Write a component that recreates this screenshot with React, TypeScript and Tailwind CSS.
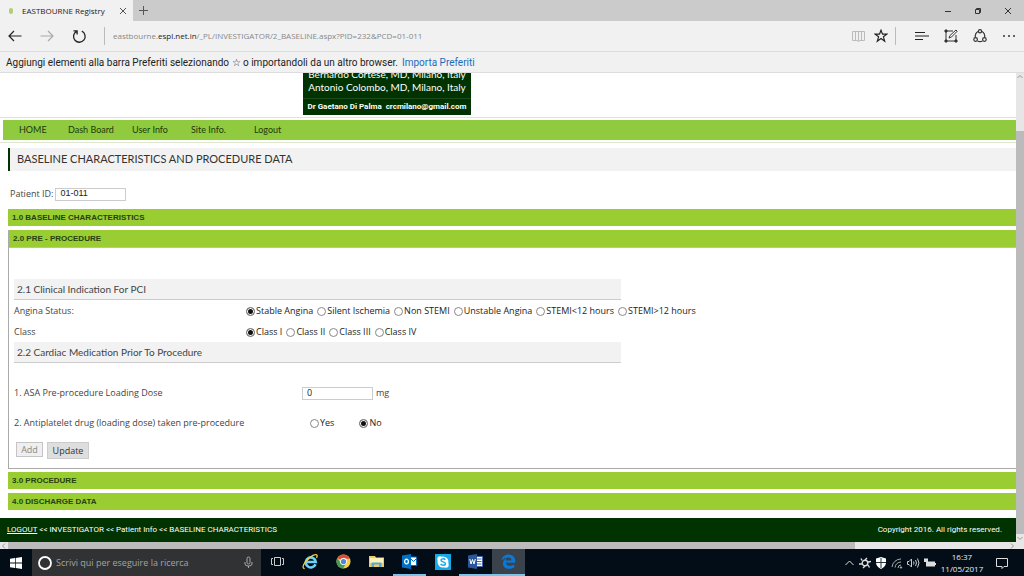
import React from 'react';

const NAV_ITEMS = [
  { label: 'HOME', width: 'w-[49px]' },
  { label: 'Dash Board', width: 'w-16' },
  { label: 'User Info', width: 'w-[59px]' },
  { label: 'Site Info.', width: 'w-[63px]' },
  { label: 'Logout', width: 'w-16' },
];

const ANGINA = ['Stable Angina', 'Silent Ischemia', 'Non STEMI', 'Unstable Angina', 'STEMI<12 hours', 'STEMI>12 hours'];
const CLASSES = ['Class I', 'Class II', 'Class III', 'Class IV'];

interface RadioProps {
  name: string;
  label: string;
  checked?: boolean;
}

const Radio: React.FC<RadioProps> = ({ name, label, checked }) => (
  <label className="flex items-center gap-px whitespace-nowrap text-[#222]">
    <input
      type="radio"
      name={name}
      defaultChecked={checked}
      className="h-[9px] w-[9px] shrink-0 appearance-none rounded-full border border-[#888] bg-white checked:bg-[#111] checked:shadow-[inset_0_0_0_1px_white]"
    />
    {label}
  </label>
);

const SectionBar: React.FC<{ title: string }> = ({ title }) => (
  <h2 className="flex h-[17px] items-center bg-[#9acd32] px-1 font-['Liberation_Sans',sans-serif] text-[8px] font-bold text-[#254012]">{title}</h2>
);

const SubHeading: React.FC<{ title: string }> = ({ title }) => (
  <h3 className="flex h-[21px] w-[607px] max-w-full items-center border-b border-[#ccc] bg-[#f2f2f2] px-[3px] font-[Lato,sans-serif] text-[10px] text-[#444]">{title}</h3>
);

const TitleBar = () => (
  <div className="flex h-[21px] bg-[#cbcbcb]">
    <div className="flex w-[133px] items-center bg-[#f1f1f1] pl-[9px] text-[8px] text-[#222]">
      <span className="mr-[9px] h-[6px] w-1 rounded-full bg-[#b3cd74]" />
      <span className="grow whitespace-nowrap">EASTBOURNE Registry</span>
      <button aria-label="Close tab" className="mr-[6px]">
        <svg width="8" height="8" viewBox="0 0 8 8" stroke="#555" fill="none"><path d="M1 1l6 6M7 1L1 7" /></svg>
      </button>
    </div>
    <button aria-label="New tab" className="ml-[6px]">
      <svg width="9" height="9" viewBox="0 0 9 9" stroke="#555" fill="none"><path d="M4.500 0v9M0 4.500h9" /></svg>
    </button>
    <div className="ml-auto flex items-center gap-[22px] pr-3">
      <button aria-label="Minimize"><svg width="8" height="8" viewBox="0 0 8 8" stroke="#333" fill="none"><path d="M1 4.500h6" /></svg></button>
      <button aria-label="Restore"><svg width="8" height="8" viewBox="0 0 8 8" stroke="#333" fill="none"><path d="M1.500 2.500h4v4h-4zM2.500 2.500v-1h4v4h-1" /></svg></button>
      <button aria-label="Close"><svg width="8" height="8" viewBox="0 0 8 8" stroke="#333" fill="none"><path d="M1 1l6 6M7 1L1 7" /></svg></button>
    </div>
  </div>
);

const Toolbar = () => (
  <div className="flex h-[31px] items-center border-b border-[#dcdcdc] bg-[#f1f1f1] px-2">
    <button aria-label="Back">
      <svg width="14" height="12" viewBox="0 0 14 12" stroke="#222" strokeWidth="1.200" fill="none"><path d="M13.500 6H1M6 1L1 6l5 5" /></svg>
    </button>
    <button aria-label="Forward" className="ml-[18px]">
      <svg width="14" height="12" viewBox="0 0 14 12" stroke="#aaa" strokeWidth="1.200" fill="none"><path d="M.5 6H13M8 1l5 5-5 5" /></svg>
    </button>
    <button aria-label="Refresh" className="ml-[18px]">
      <svg width="15" height="15" viewBox="0 0 15 15" stroke="#222" strokeWidth="1.300" fill="none"><path d="M9.800 2.200A5.800 5.800 0 1 1 4.500 2.400M1.500 1.900h3.600v3.600" /></svg>
    </button>
    <p className="ml-[17px] grow whitespace-nowrap border-l border-[#bbb] py-[2px] pl-2 text-[8px] leading-[14px] text-[#888]">
      eastbourne.<span className="text-[#222]">espl.net.in</span>/_PL/INVESTIGATOR/2_BASELINE.aspx?PID=232&amp;PCD=01-011
    </p>
    <button aria-label="Reading view">
      <svg width="14" height="12" viewBox="0 0 14 12" stroke="#bbb" fill="none"><path d="M.5 1.500h12v9H8l-1.500 1L5 10.500H.5zM6.500 1.500v9.500M3.500 2v8M9.500 2v8" /></svg>
    </button>
    <button aria-label="Favorite" className="ml-2">
      <svg width="14" height="14" viewBox="0 0 14 14" stroke="#222" strokeWidth="1.200" fill="none"><path d="M7 1.200l1.500 4h4.300L9.400 7.800l1.300 4.400L7 9.600l-3.700 2.600 1.300-4.400L1.200 5.200h4.300z" /></svg>
    </button>
    <span className="mx-[7px] h-[18px] w-px bg-[#bbb]" />
    <button aria-label="Hub" className="ml-3">
      <svg width="14" height="12" viewBox="0 0 14 12" stroke="#222" strokeWidth="1.200" fill="none"><path d="M0 2.500h10M0 6h14M0 9.500h8" /></svg>
    </button>
    <button aria-label="Web note" className="ml-[15px]">
      <svg width="14" height="14" viewBox="0 0 14 14" stroke="#333" fill="none">
        <path d="M9 2H2v10h10V6" />
        <path d="M5 9l1-2.500 6-5.500 1.200 1.200L7.500 8z" fill="#fff" />
        <path d="M1 1h2v2H1zM1 11h2v2H1zM11 11h2v2h-2z" fill="#333" />
      </svg>
    </button>
    <button aria-label="Share" className="ml-[15px]">
      <svg width="14" height="14" viewBox="0 0 14 14" stroke="#333" strokeWidth="1.200" fill="none">
        <path d="M5.200 2.500C3 3.500 2 5.500 2.300 8.500M8.800 2.500c2.200 1 3.200 3 2.900 6M4.500 12c1.700.8 3.300.8 5 0" />
        <circle cx="7" cy="2.300" r="1.600" /><circle cx="2.600" cy="10.500" r="1.800" /><circle cx="11.400" cy="10.500" r="1.800" />
      </svg>
    </button>
    <button aria-label="More" className="ml-[15px]">
      <svg width="14" height="4" viewBox="0 0 14 4" fill="#333"><circle cx="2" cy="2" r="1" /><circle cx="7" cy="2" r="1" /><circle cx="12" cy="2" r="1" /></svg>
    </button>
  </div>
);

const PreProcedure = () => (
  <section className="mt-1 border-l border-b border-[#aaa] pb-[9px]">
    <SectionBar title="2.0 PRE - PROCEDURE" />
    <div className="border-t border-[#b8c890] pl-[5px] pt-[31px] text-[9px] text-[#444]">
      <SubHeading title="2.1 Clinical Indication For PCI" />
      <div className="flex h-[22px] items-center">
        <span className="w-[232px]">Angina Status:</span>
        <div className="flex gap-1">
          {ANGINA.map((a, i) => <Radio key={a} name="angina" label={a} checked={i === 0} />)}
        </div>
      </div>
      <div className="flex h-5 items-center">
        <span className="w-[232px]">Class</span>
        <div className="flex gap-1">
          {CLASSES.map((c, i) => <Radio key={c} name="class" label={c} checked={i === 0} />)}
        </div>
      </div>
      <SubHeading title="2.2 Cardiac Medication Prior To Procedure" />
      <div className="mt-5 flex h-5 items-center">
        <label htmlFor="asa" className="w-[288px]">1. ASA Pre-procedure Loading Dose</label>
        <input id="asa" defaultValue="0" className="h-[13px] w-[71px] border border-[#ccc] px-1 text-[9px] text-[#222]" />
        <span className="ml-[3px]">mg</span>
      </div>
      <div className="mt-[10px] flex h-5 items-center">
        <span className="w-[296px]">2. Antiplatelet drug (loading dose) taken pre-procedure</span>
        <div className="flex gap-[25px]">
          <Radio name="antiplatelet" label="Yes" />
          <Radio name="antiplatelet" label="No" checked />
        </div>
      </div>
      <div className="mt-[9px] flex items-start gap-1 pl-[2px]">
        <button className="h-[15px] w-[27px] border border-[#c4c4c4] bg-[#efefef] text-[9px] leading-[13px] text-[#888]">Add</button>
        <button className="h-[17px] w-[42px] border border-[#ccc] bg-[#dedede] text-[9px] leading-[15px] text-[#333]">Update</button>
      </div>
    </div>
  </section>
);

const Page = () => (
  <main className="min-w-0 grow bg-white">
    <header className="ml-[303px] flex h-[42px] w-[168px] flex-col justify-end overflow-hidden bg-[#003300] text-center font-[Lato,sans-serif] text-white">
      <p className="shrink-0 text-[10px] leading-[13px]">Bernardo Cortese, MD, Milano, Italy</p>
      <p className="shrink-0 text-[10px] leading-[13px]">Antonio Colombo, MD, Milano, Italy</p>
      <p className="mt-1 shrink-0 border-t border-[#1d4a1d] whitespace-nowrap font-[Roboto,sans-serif] text-[8px] font-bold leading-4">Dr Gaetano Di Palma&nbsp; crcmilano@gmail.com</p>
    </header>
    <nav className="mt-[2px] border-y border-[#dde8cc] py-[2px]">
      <div className="ml-[3px] flex h-5 items-center bg-[#8fca3f] pl-4 font-[Lato,sans-serif] text-[9px] text-[#1c3a0a]">
        {NAV_ITEMS.map((item) => <a key={item.label} href="#" className={item.width}>{item.label}</a>)}
      </div>
    </nav>
    <div className="pl-2">
      <h1 className="mt-[5px] flex h-[23px] items-center border-l-2 border-[#003300] bg-[#f2f2f2] pl-[7px] font-[Lato,sans-serif] text-[11px] text-[#333]">BASELINE CHARACTERISTICS AND PROCEDURE DATA</h1>
      <div className="flex h-[38px] items-center gap-[2px] pt-2 pl-[2px] text-[9px] text-[#444]">
        <label htmlFor="pid">Patient ID:</label>
        <input id="pid" defaultValue="01-011" className="h-[13px] w-[71px] border border-[#ccc] px-1 font-['Liberation_Sans',sans-serif] text-[9px] text-[#222]" />
      </div>
      <SectionBar title="1.0 BASELINE CHARACTERISTICS" />
      <PreProcedure />
      <div className="mt-[3px] space-y-1">
        <SectionBar title="3.0 PROCEDURE" />
        <SectionBar title="4.0 DISCHARGE DATA" />
      </div>
    </div>
    <footer className="mt-2 flex h-6 items-center justify-between bg-[#003300] pl-[7px] pr-[14px] font-[Roboto,sans-serif] text-[8px] text-white">
      <p><a href="#" className="underline">LOGOUT</a> &lt;&lt; INVESTIGATOR &lt;&lt; Patient Info &lt;&lt; BASELINE CHARACTERISTICS</p>
      <p>Copyright 2016. All rights reserved.</p>
    </footer>
  </main>
);

const Chevron: React.FC<{ d: string; color: string }> = ({ d, color }) => (
  <svg width="8" height="8" viewBox="0 0 8 8" stroke={color} fill="none" className="shrink-0"><path d={d} /></svg>
);

const APP_BUTTON = 'flex h-full w-[33px] items-center justify-center border-b-2';

const Taskbar = () => (
  <div className="flex h-[27px] items-center bg-[#020d18] text-white">
    <button aria-label="Start" className="flex w-8 justify-center">
      <svg width="12" height="12" viewBox="0 0 12 12" fill="#fff"><path d="M0 1.700L5 1v4.600H0zM5.700.9L12 0v5.600H5.700zM0 6.400h5V11l-5-.7zM5.700 6.400H12V12l-6.300-.9z" /></svg>
    </button>
    <label className="flex h-full w-[229px] items-center bg-[#303234] pl-[6px] pr-2">
      <svg width="14" height="14" viewBox="0 0 14 14" fill="none" stroke="#fff" strokeWidth="1.800"><circle cx="7" cy="7" r="6" /></svg>
      <input aria-label="Cerca" placeholder="Scrivi qui per eseguire la ricerca" className="ml-1 min-w-0 grow bg-transparent text-[9px] placeholder:text-[#a4a4a4]" />
      <svg width="9" height="13" viewBox="0 0 9 13" fill="none" stroke="#aaa"><rect x="3" y="1" width="3" height="7" rx="1.500" /><path d="M1 6v2q0 2 3.500 2T8 8V6M4.500 10v2" /></svg>
    </label>
    <button aria-label="Task view" className={`${APP_BUTTON} border-transparent`}>
      <svg width="13" height="11" viewBox="0 0 13 11" fill="none" stroke="#ccc"><path d="M3.500 1.500h6v8h-6zM2 2.500H.5v6H2M11 2.500h1.500v6H11" /></svg>
    </button>
    <button aria-label="Internet Explorer" className={`${APP_BUTTON} border-transparent`}>
      <svg width="17" height="17" viewBox="0 0 17 17" fill="none">
        <path d="M13.500 11.200A5 5 0 1 1 13.800 9H4.500" stroke="#6fd0f5" strokeWidth="2.600" />
        <path d="M2.700 15.600C-1 15.500 2 9 7.500 4.700 12 1 17 .2 14.500 5" stroke="#f5cf3d" strokeWidth="1.300" />
      </svg>
    </button>
    <button aria-label="Chrome" className={`${APP_BUTTON} border-transparent`}>
      <svg width="15" height="15" viewBox="0 0 16 16">
        <circle cx="8" cy="8" r="7.500" fill="#f6cf46" />
        <path d="M8 8L1.500 4.300A7.500 7.500 0 0 1 14.500 4.300L15 5H8z" fill="#de4a3c" />
        <path d="M1.500 4.300A7.500 7.500 0 0 0 7.500 15.500L11 9.500 8 8 5 9.500z" fill="#3f9d57" />
        <circle cx="8" cy="8" r="3.700" fill="#fff" /><circle cx="8" cy="8" r="2.800" fill="#4a86e0" />
      </svg>
    </button>
    <button aria-label="File Explorer" className={`${APP_BUTTON} border-transparent`}>
      <svg width="15" height="13" viewBox="0 0 15 13">
        <path d="M0 1h6l1 1.500h8V12H0z" fill="#efcb68" /><path d="M1 3h13v5H1z" fill="#fff0b5" />
        <path d="M2.500 12V7.500h10V12H10V9.500H5V12z" fill="#55a9da" />
      </svg>
    </button>
    <button aria-label="Outlook" className={`${APP_BUTTON} border-[#79c5ea]`}>
      <svg width="15" height="15" viewBox="0 0 15 15">
        <path d="M8 3h6.500v8.500H8z" fill="#fff" stroke="#0072c6" /><path d="M8 4l3.500 3.500L15 4" stroke="#0072c6" fill="none" />
        <path d="M0 1.500L9 0v15l-9-1.500z" fill="#0072c6" /><ellipse cx="4.500" cy="7.500" rx="1.900" ry="2.300" fill="none" stroke="#fff" strokeWidth="1.300" />
      </svg>
    </button>
    <button aria-label="Skype" className={`${APP_BUTTON} border-transparent`}>
      <svg width="16" height="16" viewBox="0 0 16 16">
        <path d="M0 0h16v16H0z" fill="#16a9e7" /><circle cx="8" cy="8" r="5.500" fill="#fff" /><circle cx="5" cy="5" r="2.700" fill="#fff" /><circle cx="11" cy="11" r="2.700" fill="#fff" />
        <path d="M10.300 5.800C9.300 4.400 6 4.600 6 6.200c0 2 4.400 1.300 4.400 3.500 0 1.900-3.800 2-4.800.2" fill="none" stroke="#16a9e7" strokeWidth="1.500" />
      </svg>
    </button>
    <button aria-label="Word" className={`${APP_BUTTON} border-[#79c5ea]`}>
      <svg width="15" height="15" viewBox="0 0 15 15">
        <path d="M8 2.500h6.500v10H8z" fill="#fff" stroke="#3f66ad" /><path d="M9 5h4.500M9 7.500h4.500M9 10h4.500" stroke="#3f66ad" />
        <path d="M0 1.500L9 0v15l-9-1.500z" fill="#2b5797" /><path d="M1.800 5l1.200 5 1.500-4.500L6 10l1.300-5" fill="none" stroke="#fff" />
      </svg>
    </button>
    <button aria-label="Edge" className={`${APP_BUTTON} border-[#79c5ea] bg-[#3a424b]`}>
      <svg width="15" height="15" viewBox="0 0 16 16" fill="#0b78d4">
        <path d="M.6 7C1.200 3 4 .5 8.200.5c4.500 0 7 3.200 7 7.500v1.300H5.200c.2 3.700 5.300 4.300 9 2v3.200c-1.800 1-3.700 1.300-5.600 1.300-4 0-6.500-2.500-6.500-5.800 0-2.500 1.500-4.500 3.900-5.500-.6.700-.9 1.500-.9 2.400h6c0-2-.9-3.300-3.200-3.300C5 3.600 2.500 4.500.6 7z" />
      </svg>
    </button>
    <div className="ml-auto flex items-center gap-1 pr-4">
      <svg width="11" height="12" viewBox="0 0 11 12" fill="none" stroke="#ddd"><path d="M1.500 8l4-4 4 4" /></svg>
      <svg width="12" height="12" viewBox="0 0 12 12" fill="none" stroke="#ddd" strokeWidth="1.400"><circle cx="6" cy="6" r="2.800" /><path d="M3 3.500L2 1.500M6 3l2-2M9 5l3-.5M9 8l1.500 2.500M6 9l-2 2M3 7H0" /></svg>
      <svg width="12" height="12" viewBox="0 0 12 12"><path d="M6 0l5 1.500v4c0 3-2 5-5 6.500-3-1.500-5-3.500-5-6.500v-4z" fill="#fff" /><path d="M6 1v10M1 5.500h10" stroke="#26323e" /></svg>
      <svg width="12" height="12" viewBox="0 0 12 12" fill="none" stroke="#aaa"><path d="M1 10A9 9 0 0 1 10 2M4 10.500a6 6 0 0 1 6-5.500M7 11a3 3 0 0 1 3-3" /><circle cx="10" cy="10.500" r=".7" fill="#fff" /></svg>
      <svg width="13" height="12" viewBox="0 0 13 12" fill="none" stroke="#ccc"><path d="M.5 4.500H2L4.500 2v8L2 7.500H.5zM6.500 4.500q1 1.500 0 3M8.500 3q2 3 0 6M10.500 1.500q3 4.500 0 9" /></svg>
      <svg width="12" height="10" viewBox="0 0 12 10" fill="#ddd"><path d="M2 3.500h9v5H2zM11 5h1v2h-1zM0 1h4v3H0z" /><path d="M1 0v2M3 0v2" stroke="#ddd" /></svg>
      <div className="w-11 text-center text-[8px] leading-3 text-[#eee]">
        <p>16:37</p>
        <p>11/05/2017</p>
      </div>
      <button aria-label="Notifications" className="ml-2">
        <svg width="12" height="12" viewBox="0 0 12 12" fill="none" stroke="#ddd"><path d="M.5 1.500h11v8H8l-2 2v-2H.5z" /></svg>
      </button>
    </div>
  </div>
);

export default function App() {
  return (
    <div className="flex min-h-screen flex-col bg-white font-['Open_Sans',sans-serif]">
      <TitleBar />
      <Toolbar />
      <div className="flex h-[21px] items-center gap-1 border-b border-[#ddd] bg-[#f1f1f1] px-[6px] font-[Roboto,sans-serif] text-[10px] text-[#222]">
        <p>Aggiungi elementi alla barra Preferiti selezionando ☆ o importandoli da un altro browser.</p>
        <a href="#" className="text-[#1b6bbd]">Importa Preferiti</a>
      </div>
      <div className="flex grow">
        <Page />
        <div className="flex w-2 shrink-0 flex-col items-center justify-between bg-[#e6e6e6]">
          <Chevron d="M1.500 5L4 2.500 6.500 5" color="#999" />
          <div className="mt-[50px] w-full grow bg-[#bbb]" />
          <Chevron d="M1.500 3L4 5.500 6.500 3" color="#999" />
        </div>
      </div>
      <div className="flex h-[7px] items-center bg-[#e6e6e6] pr-2">
        <Chevron d="M5 1.500L2.500 4 5 6.500" color="#999" />
        <div className="h-full w-5/6 bg-[#bbb]" />
        <div className="grow" />
        <Chevron d="M3 1.500L5.500 4 3 6.500" color="#999" />
      </div>
      <Taskbar />
    </div>
  );
}
